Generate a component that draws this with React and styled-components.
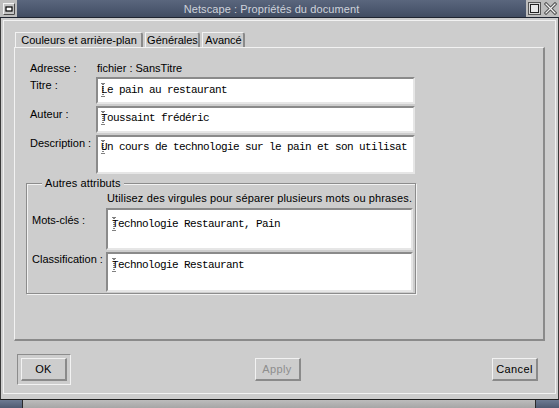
import React from "react";
import styled, { createGlobalStyle } from "styled-components";

const GlobalStyle = createGlobalStyle`
  html, body { margin: 0; padding: 0; background: #2c2c2c; }
  * { box-sizing: border-box; }
`;

const BG = "#cdcdcd";
const LIGHT = "#f2f2f2";
const DARK = "#8a8a8a";
const SANS = `"Liberation Sans", Arial, sans-serif`;
const MONO = `"Liberation Mono", "Courier New", monospace`;

const Window = styled.div`
  width: 559px;
  height: 408px;
  display: flex;
  flex-direction: column;
  font-family: ${SANS};
  font-size: 11px;
  color: #000;
`;

const TitleBar = styled.div`
  height: 18px;
  display: flex;
  border-bottom: 1px solid #1e2430;
  background: #b8b8b8;
`;

const MenuBox = styled.div`
  width: 17px;
  display: flex;
  align-items: center;
  justify-content: center;
  background: #bdbdbd;
`;

const TitleBand = styled.div`
  flex: 1;
  display: flex;
  align-items: center;
  justify-content: center;
  background: linear-gradient(#5a667d, #4b576e 60%, #414c61);
  color: #cfd3db;
  font-size: 11px;
  letter-spacing: 0.1px;
`;

const RightBox = styled.div`
  width: 33px;
  display: flex;
  align-items: center;
  justify-content: space-around;
  background: #bdbdbd;
`;

const Frame = styled.div`
  flex: 1;
  display: flex;
  flex-direction: column;
  background: ${BG};
  border-left: 1px solid #3a3a3a;
  border-right: 1px solid #3a3a3a;
  border-bottom: 1px solid #1e1e1e;
  padding: 2px 2px 5px 2px;
`;

const Client = styled.div`
  flex: 1;
  display: flex;
  flex-direction: column;
  border: 1px solid ${LIGHT};
  padding: 11px 10px 8px 10px;
`;

const Tabs = styled.div`
  display: flex;
  gap: 2px;
  height: 15px;
  margin-left: 1px;
`;

const Tab = styled.div`
  width: ${(p) => p.$w}px;
  height: 15px;
  display: flex;
  align-items: center;
  justify-content: center;
  padding-left: 1px;
  border-top: 1px solid ${LIGHT};
  border-left: 1px solid ${LIGHT};
  border-right: 2px solid ${DARK};
  border-top-right-radius: 3px;
  white-space: nowrap;
  line-height: 13px;
`;

const Panel = styled.div`
  height: 294px;
  border-top: 1px solid ${LIGHT};
  border-left: 1px solid ${LIGHT};
  border-right: 2px solid ${DARK};
  border-bottom: 2px solid ${DARK};
  padding: 14px 0 0 11px;
  display: flex;
  flex-direction: column;
`;

const Form = styled.div`
  display: grid;
  grid-template-columns: 66px 319px;
  row-gap: 2px;
  margin-left: 4px;
  align-items: start;
`;

const Label = styled.div`
  line-height: 13px;
  padding-top: ${(p) => p.$top ?? 0}px;
  white-space: nowrap;
`;

const Value = styled.div`
  line-height: 13px;
  margin-left: 1px;
`;

const Field = styled.div`
  height: ${(p) => p.$h}px;
  background: #fff;
  border-top: 2px solid ${DARK};
  border-left: 2px solid ${DARK};
  border-bottom: 2px solid #e6e6e6;
  border-right: 2px solid #e6e6e6;
  padding: ${(p) => p.$pt}px 0 0 ${(p) => p.$pl}px;
  font-family: ${MONO};
  font-size: 11px;
  letter-spacing: -0.6px;
  line-height: 13px;
  white-space: nowrap;
  overflow: hidden;
`;

const CaretMark = styled.svg`
  display: inline-block;
  vertical-align: top;
  margin-right: -5px;
  margin-top: -1px;
`;

const Caret = () => (
  <CaretMark width="5" height="14" viewBox="0 0 5 14">
    <path d="M0.5 0.5h3M0.5 13.5h3M2 1v12" stroke="#000" strokeWidth="1" strokeDasharray="1 1" fill="none" />
  </CaretMark>
);

const Group = styled.fieldset`
  margin: 3px 0 0 0;
  width: 390px;
  padding: 0 2px 1px 5px;
  border: 1px solid #8c8c8c;
  box-shadow: inset 1px 1px 0 ${LIGHT}, 1px 1px 0 ${LIGHT};
  min-inline-size: 0;
`;

const Legend = styled.legend`
  margin-left: 10px;
  padding: 0 3px;
  line-height: 13px;
  background: ${BG};
  letter-spacing: 0.1px;
`;

const GroupGrid = styled.div`
  display: grid;
  grid-template-columns: 74px 307px;
  row-gap: 2px;
  align-items: start;
`;

const Hint = styled.div`
  grid-column: 2;
  line-height: 13px;
  padding: 2px 0 1px 1px;
  white-space: nowrap;
  letter-spacing: 0.13px;
`;

const ButtonRow = styled.div`
  margin-top: 13px;
  height: 31px;
  display: grid;
  grid-template-columns: 1fr auto 1fr;
  align-items: center;
  padding: 0 7px 0 3px;
`;

const DefaultFrame = styled.div`
  justify-self: start;
  width: 54px;
  height: 31px;
  border-top: 1px solid #8c8c8c;
  border-left: 1px solid #8c8c8c;
  border-bottom: 1px solid ${LIGHT};
  border-right: 1px solid ${LIGHT};
  display: flex;
  align-items: center;
  justify-content: center;
`;

const Button = styled.div`
  justify-self: ${(p) => p.$align || "center"};
  width: 46px;
  height: 23px;
  display: flex;
  align-items: center;
  justify-content: center;
  border-top: 1px solid ${LIGHT};
  border-left: 1px solid ${LIGHT};
  border-right: 2px solid ${DARK};
  border-bottom: 2px solid ${DARK};
  color: ${(p) => (p.$disabled ? "#8e8e8e" : "#000")};
  letter-spacing: 0.4px;
  font-size: 11px;
`;

const Strip = styled.div`
  height: 8px;
  display: flex;
  background: #2a2a2a;
`;

const StripSeg = styled.div`
  width: ${(p) => (p.$w ? `${p.$w}px` : "auto")};
  flex: ${(p) => (p.$w ? "none" : 1)};
  margin: 0 ${(p) => p.$mr || 0}px 0 ${(p) => p.$ml || 0}px;
  background: ${(p) =>
    p.$blue ? "linear-gradient(#6c7a92, #4f5b72)" : "linear-gradient(#bcbcbc, #a6a6a6)"};
`;

export default function App() {
  return (
    <>
      <GlobalStyle />
      <Window>
        <TitleBar>
          <MenuBox>
            <svg width="12" height="12" viewBox="0 0 12 12">
              <rect x="0.5" y="0.5" width="11" height="11" fill="#c4c4c4" stroke="#f4f4f4" />
              <path d="M11.5 0.5v11h-11" stroke="#4a4a4a" fill="none" />
              <rect x="3" y="4" width="6" height="4" fill="#fff" stroke="#000" strokeWidth="1.2" />
            </svg>
          </MenuBox>
          <TitleBand>Netscape : Propriétés du document</TitleBand>
          <RightBox>
            <svg width="13" height="13" viewBox="0 0 13 13">
              <rect x="0.5" y="0.5" width="12" height="12" fill="#d8d8d8" stroke="#555" />
              <rect x="2.5" y="2.5" width="8" height="8" fill="#e8e8e8" stroke="#222" />
            </svg>
            <svg width="13" height="13" viewBox="0 0 13 13">
              <path d="M2 2l9 9M11 2l-9 9" stroke="#555" strokeWidth="3.2" strokeLinecap="square" />
              <path d="M2 2l9 9M11 2l-9 9" stroke="#f4f4f4" strokeWidth="1.2" strokeLinecap="square" />
            </svg>
          </RightBox>
        </TitleBar>
        <Frame>
          <Client>
            <Tabs>
              <Tab $w={128}>Couleurs et arrière-plan</Tab>
              <Tab $w={55}>Générales</Tab>
              <Tab $w={43}>Avancé</Tab>
            </Tabs>
            <Panel>
              <Form>
                <Label>Adresse :</Label>
                <Value>fichier : SansTitre</Value>
                <Label $top={2}>Titre :</Label>
                <Field $h={27} $pt={5} $pl={3}>
                  <Caret />Le pain au restaurant
                </Field>
                <Label $top={2}>Auteur :</Label>
                <Field $h={27} $pt={4} $pl={3}>
                  <Caret />Toussaint frédéric
                </Field>
                <Label $top={2}>Description :</Label>
                <Field $h={39} $pt={4} $pl={3}>
                  <Caret />Un cours de technologie sur le pain et son utilisat
                </Field>
              </Form>
              <Group>
                <Legend>Autres attributs</Legend>
                <GroupGrid>
                  <Hint>Utilisez des virgules pour séparer plusieurs mots ou phrases.</Hint>
                  <Label $top={6}>Mots-clés :</Label>
                  <Field $h={42} $pt={8} $pl={4}>
                    <Caret />Technologie Restaurant, Pain
                  </Field>
                  <Label $top={1}>Classification :</Label>
                  <Field $h={40} $pt={5} $pl={4}>
                    <Caret />Technologie Restaurant
                  </Field>
                </GroupGrid>
              </Group>
            </Panel>
            <ButtonRow>
              <DefaultFrame>
                <Button>OK</Button>
              </DefaultFrame>
              <Button $disabled>Apply</Button>
              <Button $align="end">Cancel</Button>
            </ButtonRow>
          </Client>
        </Frame>
        <Strip>
          <StripSeg $w={22} $blue $mr={1} />
          <StripSeg />
          <StripSeg $w={23} $blue $ml={1} />
        </Strip>
      </Window>
    </>
  );
}
